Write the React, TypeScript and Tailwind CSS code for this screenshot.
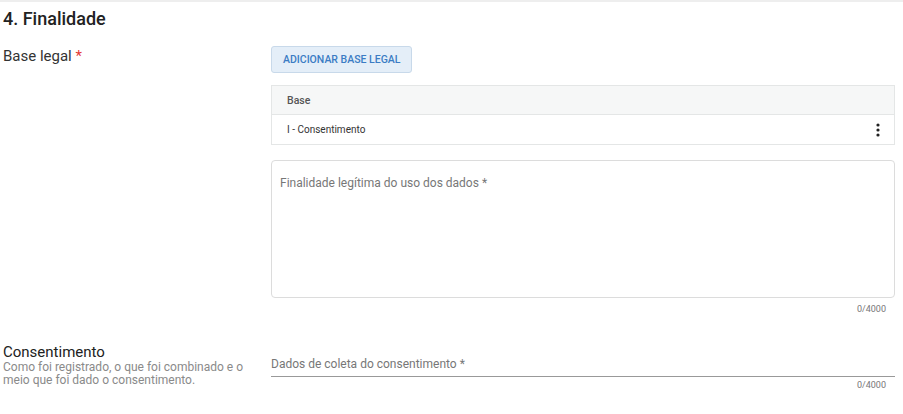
import React from 'react';

export default function App() {
  return (
    <div
      className="w-[903px] h-[414px] bg-white overflow-hidden border-t-2 border-[#eeeeee] text-[#212121]"
      style={{ fontFamily: 'Roboto, "Liberation Sans", sans-serif' }}
    >
      <h2 className="pl-[3px] pt-[5px] text-[18px] font-medium leading-[24px] text-[#222]">4. Finalidade</h2>

      <div className="flex mt-[15px]">
        <div className="w-[271px] shrink-0 pl-[3px] pt-[1px] text-[15px] leading-[18px] text-[#333]">
          Base legal <span className="text-[#e53935]">*</span>
        </div>
        <div className="w-[624px]">
          <button className="h-[27px] px-[11px] rounded-[3px] border border-[#c8d9ea] bg-[#e4eef8] text-[10.5px] font-medium text-[#3b7cc4]">
            ADICIONAR BASE LEGAL
          </button>

          <div className="mt-[12px] border border-[#e4e6e6]">
            <div className="h-[29px] flex items-center px-[15px] bg-[#f6f7f7] border-b border-[#e4e6e6] text-[10.5px] font-medium text-[#555]">
              Base
            </div>
            <div className="h-[29px] flex items-center justify-between pl-[15px] pr-[14px] text-[10px] text-[#333]">
              <span>I - Consentimento</span>
              <svg width="4" height="14" viewBox="0 0 4 14" fill="#222">
                <circle cx="2" cy="2" r="1.6" />
                <circle cx="2" cy="7" r="1.6" />
                <circle cx="2" cy="12" r="1.6" />
              </svg>
            </div>
          </div>

          <div className="mt-[15px] h-[138px] rounded-[4px] border border-[#dcdcdc] px-[8px] pt-[14px] text-[12px] leading-[16px] text-[#777]">
            Finalidade legítima do uso dos dados *
          </div>
          <div className="text-right pr-[9px] mt-[5px] text-[9px] leading-[12px] text-[#777]">0/4000</div>
        </div>
      </div>

      <div className="flex mt-[29px]">
        <div className="w-[271px] shrink-0 pl-[3px]">
          <div className="text-[15px] leading-[17px] text-[#222]">Consentimento</div>
          <div className="text-[12px] leading-[13px] text-[#8a8a8a]">
            Como foi registrado, o que foi combinado e o
            <br />
            meio que foi dado o consentimento.
          </div>
        </div>
        <div className="w-[624px] pt-[13px]">
          <div className="pb-[4px] border-b border-[#999] text-[12px] leading-[15px] text-[#777]">
            Dados de coleta do consentimento *
          </div>
          <div className="text-right pr-[9px] mt-[3px] text-[9px] leading-[11px] text-[#777]">0/4000</div>
        </div>
      </div>
    </div>
  );
}
